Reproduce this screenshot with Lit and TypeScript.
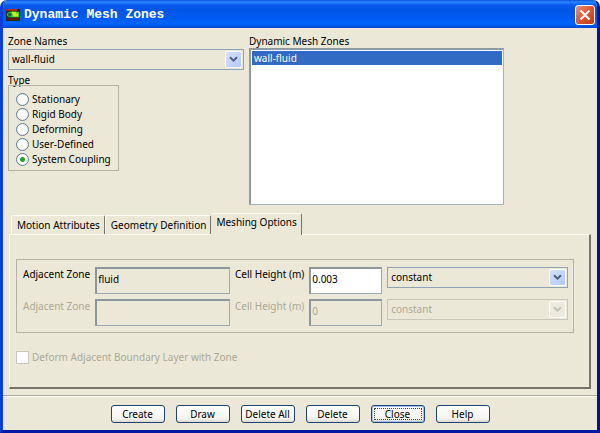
import { LitElement, html, css, svg } from "lit";
import { customElement, property, state } from "lit/decorators.js";
import { classMap } from "lit/directives/class-map.js";

@customElement("xp-combo")
class XpCombo extends LitElement {
  @property() label = "";
  @property() value = "";
  @property({ type: Boolean }) disabled = false;

  static styles = css`
    :host { display: block; }
    .box {
      display: grid;
      grid-template-columns: minmax(0, 1fr) 17px;
      height: 21px;
      box-sizing: border-box;
      border: 1px solid #8fa3b5;
      background: #ebe8d7;
      padding: 1px;
    }
    .box.off { border-color: #c9c7ba; }
    select {
      grid-area: 1 / 1 / 2 / 3;
      appearance: none;
      border: 0;
      margin: 0;
      padding: 0 18px 0 2px;
      background: transparent;
      font: inherit;
      color: #000;
      outline: none;
      border-radius: 0;
      min-width: 0;
    }
    select:disabled { color: #aca899; opacity: 1; }
    .arrow {
      grid-area: 1 / 2;
      display: flex;
      align-items: center;
      justify-content: center;
      pointer-events: none;
      border: 1px solid #fff;
      border-radius: 2px;
      background: linear-gradient(135deg, #d6e2fd, #b4c8f6);
    }
    .off .arrow { background: #edebdf; }
    .arrow path { fill: none; stroke: #4d6185; stroke-width: 2; }
    .off .arrow path { stroke: #c4c2b6; }
  `;

  render() {
    return html`
      <div class=${classMap({ box: true, off: this.disabled })}>
        <select aria-label=${this.label} ?disabled=${this.disabled}>
          <option>${this.value}</option>
        </select>
        <span class="arrow">
          <svg width="9" height="7" viewBox="0 0 9 7"><path d="M1 1.2 4.5 4.7 8 1.2" /></svg>
        </span>
      </div>
    `;
  }
}

const TYPES = ["Stationary", "Rigid Body", "Deforming", "User-Defined", "System Coupling"];
const TABS = ["Motion Attributes", "Geometry Definition", "Meshing Options"];
const ACTIONS = ["Create", "Draw", "Delete All", "Delete", "Close", "Help"];
const ROWS = [
  { id: "a", zone: "fluid", height: "0.003", mode: "constant", enabled: true },
  { id: "b", zone: "", height: "0", mode: "constant", enabled: false },
];

const logo = svg`
  <rect width="15" height="13" fill="#2a2a0c" />
  <path d="M0 0h12v2H0z" fill="#b42c18" />
  <path d="M1 10h13v2H1z" fill="#5c1c0c" />
  <path d="M1 6q0-3 4-3h9v6H5q-4 0-4-3z" fill="#30d020" />
  <path d="M6 3h5v5H8z" fill="#c4f020" />
  <circle cx="4" cy="6" r="2" fill="#087020" />
  <rect x="11" y="5" width="2" height="3" fill="#f8e820" />
`;

@customElement("app-root")
class AppRoot extends LitElement {
  @state() private type = "System Coupling";
  @state() private tab = "Meshing Options";

  static styles = css`
    :host {
      display: block;
      font: 10px/15px "Noto Sans", "DejaVu Sans Condensed", sans-serif;
      color: #000;
    }
    .window {
      display: flex;
      flex-direction: column;
      min-height: 100vh;
      box-sizing: border-box;
      border: solid #0a40d8;
      border-width: 0 3px 3px;
      border-right-color: #00148c;
      border-bottom-color: #0018a4;
      border-radius: 7px 7px 0 0;
      overflow: hidden;
      background: #ebe8d7;
    }
    .title {
      display: flex;
      align-items: center;
      gap: 4px;
      height: 28px;
      box-sizing: border-box;
      padding: 2px 2px 0 3px;
      background: linear-gradient(#0a50d8, #2a86ff 2px, #0a5cf0 5px, #0054e3 10px, #005cf4 18px, #0264fc 24px, #0048d0);
    }
    h1 {
      flex: 1;
      margin: 0;
      font: bold 13px/16px "Liberation Mono", monospace;
      color: #fff;
    }
    .close {
      width: 20px;
      height: 20px;
      padding: 0;
      display: flex;
      align-items: center;
      justify-content: center;
      border: 1px solid #fff;
      border-radius: 3px;
      background: linear-gradient(135deg, #ec9478, #dc5530 50%, #c03c14);
    }
    .close path { stroke: #fff; stroke-width: 2; fill: none; }
    .top {
      display: grid;
      grid-template-columns: 236fr 255fr 83fr;
      column-gap: 5px;
      padding: 6px 5px 0;
    }
    .col { display: flex; flex-direction: column; }
    .col > label { line-height: 14px; }
    .types {
      align-self: flex-start;
      width: 111px;
      box-sizing: border-box;
      margin: 0;
      padding: 6px 0 3px 7px;
      border: 1px solid #b5b3a5;
    }
    .types label { display: flex; align-items: center; gap: 3px; white-space: nowrap; }
    .types input {
      appearance: none;
      width: 13px;
      height: 13px;
      margin: 0;
      border: 1px solid #5f7f9a;
      border-radius: 50%;
      background: radial-gradient(#fff 40%, #dfe3e2);
    }
    .types input:checked { background: radial-gradient(#28a028 2px, #fff 3px, #f0f0ec); }
    .caption { padding-top: 5px; line-height: 10px; }
    .list {
      height: 157px;
      box-sizing: border-box;
      padding: 1px;
      border: solid;
      border-width: 2px 1px 1px 2px;
      border-color: #8d9aa5 #a0b4c0 #a0b4c0 #8d9aa5;
      border-radius: 0;
      background: #fff;
      font: inherit;
      outline: none;
      overflow: hidden;
    }
    .list option { padding: 0 2px; min-height: 13px; line-height: 13px; color: #000; }
    .list option:checked { background: #316ac5 linear-gradient(#316ac5, #316ac5); color: #fff; }
    .tabs { display: flex; align-items: flex-end; padding: 8px 8px 0; }
    .tab {
      font: inherit;
      height: 19px;
      padding: 0 4px 0 5px;
      border: solid #fffef6;
      border-width: 1px 0 0 1px;
      border-right: 1px solid #77756a;
      border-radius: 2px 2px 0 0;
      background: #ebe8d7;
      color: #000;
      white-space: nowrap;
    }
    .tab.on {
      position: relative;
      height: 22px;
      margin-bottom: -1px;
      padding-bottom: 4px;
      border-left: 0;
    }
    .panel {
      flex: 1;
      display: flex;
      flex-direction: column;
      align-items: stretch;
      margin: 0 6px 6px;
      padding: 24px 15px 19px 6px;
      border: 1px solid #fffef6;
      border-right: 2px solid #77756a;
      border-bottom: 2px solid #77756a;
    }
    .group {
      display: grid;
      grid-template-columns: auto 135fr auto 73fr 181fr;
      gap: 5px;
      padding: 7px 5px 6px 6px;
      border: 1px solid #b5b3a5;
    }
    .row { display: contents; }
    .row label { white-space: nowrap; }
    .row.off label, .deform { color: #aca899; }
    .field {
      min-width: 0;
      width: 100%;
      height: 27px;
      box-sizing: border-box;
      margin: 0;
      padding: 0 1px 5px;
      border: solid;
      border-width: 2px 1px 1px 2px;
      border-color: #8d9699 #9cabb5 #9cabb5 #8d9699;
      border-radius: 0;
      background: #fff;
      font: inherit;
      color: #000;
      outline: none;
    }
    .field[readonly], .field:disabled { background: #ebe8d7; }
    .field:disabled { color: #aca899; }
    .deform { display: flex; align-items: center; gap: 3px; margin-top: 17px; }
    .deform input {
      appearance: none;
      width: 13px;
      height: 13px;
      margin: 0;
      border: 1px solid #cac8bb;
      background: #fff;
    }
    .actions {
      display: flex;
      justify-content: center;
      gap: 11px;
      padding: 9px 0 7px;
      border-top: 1px solid #aca899;
      box-shadow: inset 0 1px #fff;
    }
    .action {
      width: 54px;
      height: 18px;
      padding: 0;
      border: 1px solid #1c4478;
      border-radius: 3px;
      background: linear-gradient(#fff, #f4f3ee 80%, #dcd8cc);
      font: inherit;
      color: #000;
      white-space: nowrap;
    }
    .action.current { box-shadow: inset 0 0 0 1px #a8c0ec; outline: 1px dotted #444; outline-offset: -4px; }
  `;

  render() {
    return html`
      <main class="window">
        <header class="title">
          <svg width="14" height="12" viewBox="0 0 15 13" aria-hidden="true">${logo}</svg>
          <h1>Dynamic Mesh Zones</h1>
          <button class="close" aria-label="Close window">
            <svg width="12" height="12" viewBox="0 0 12 12"><path d="M1.5 1.5 10.5 10.5M10.5 1.5 1.5 10.5" /></svg>
          </button>
        </header>

        <section class="top">
          <div class="col">
            <span>Zone Names</span>
            <xp-combo label="Zone Names" value="wall-fluid"></xp-combo>
            <span class="caption" id="type">Type</span>
            <div class="types" role="radiogroup" aria-labelledby="type">
              ${TYPES.map(
                (t) => html`<label>
                  <input type="radio" name="type" .checked=${t === this.type} @change=${() => (this.type = t)} />${t}
                </label>`
              )}
            </div>
          </div>
          <div class="col">
            <label for="zones">Dynamic Mesh Zones</label>
            <select class="list" id="zones" size="8">
              <option selected>wall-fluid</option>
            </select>
          </div>
        </section>

        <div class="tabs" role="tablist">
          ${TABS.map(
            (t) => html`<button
              role="tab"
              aria-selected=${t === this.tab}
              class=${classMap({ tab: true, on: t === this.tab })}
              @click=${() => (this.tab = t)}
            >${t}</button>`
          )}
        </div>
        <section class="panel" role="tabpanel">
          <div class="group">
            ${ROWS.map(
              (r) => html`<div class=${classMap({ row: true, off: !r.enabled })}>
                <label for="zone-${r.id}">Adjacent Zone</label>
                <input class="field" id="zone-${r.id}" .value=${r.zone} readonly ?disabled=${!r.enabled} />
                <label for="height-${r.id}">Cell Height (m)</label>
                <input class="field" id="height-${r.id}" .value=${r.height} ?disabled=${!r.enabled} />
                <xp-combo label="Cell height type" value=${r.mode} ?disabled=${!r.enabled}></xp-combo>
              </div>`
            )}
          </div>
          <label class="deform"><input type="checkbox" disabled />Deform Adjacent Boundary Layer with Zone</label>
        </section>

        <footer class="actions">
          ${ACTIONS.map((a) => html`<button class=${classMap({ action: true, current: a === "Close" })}>${a}</button>`)}
        </footer>
      </main>
    `;
  }
}
